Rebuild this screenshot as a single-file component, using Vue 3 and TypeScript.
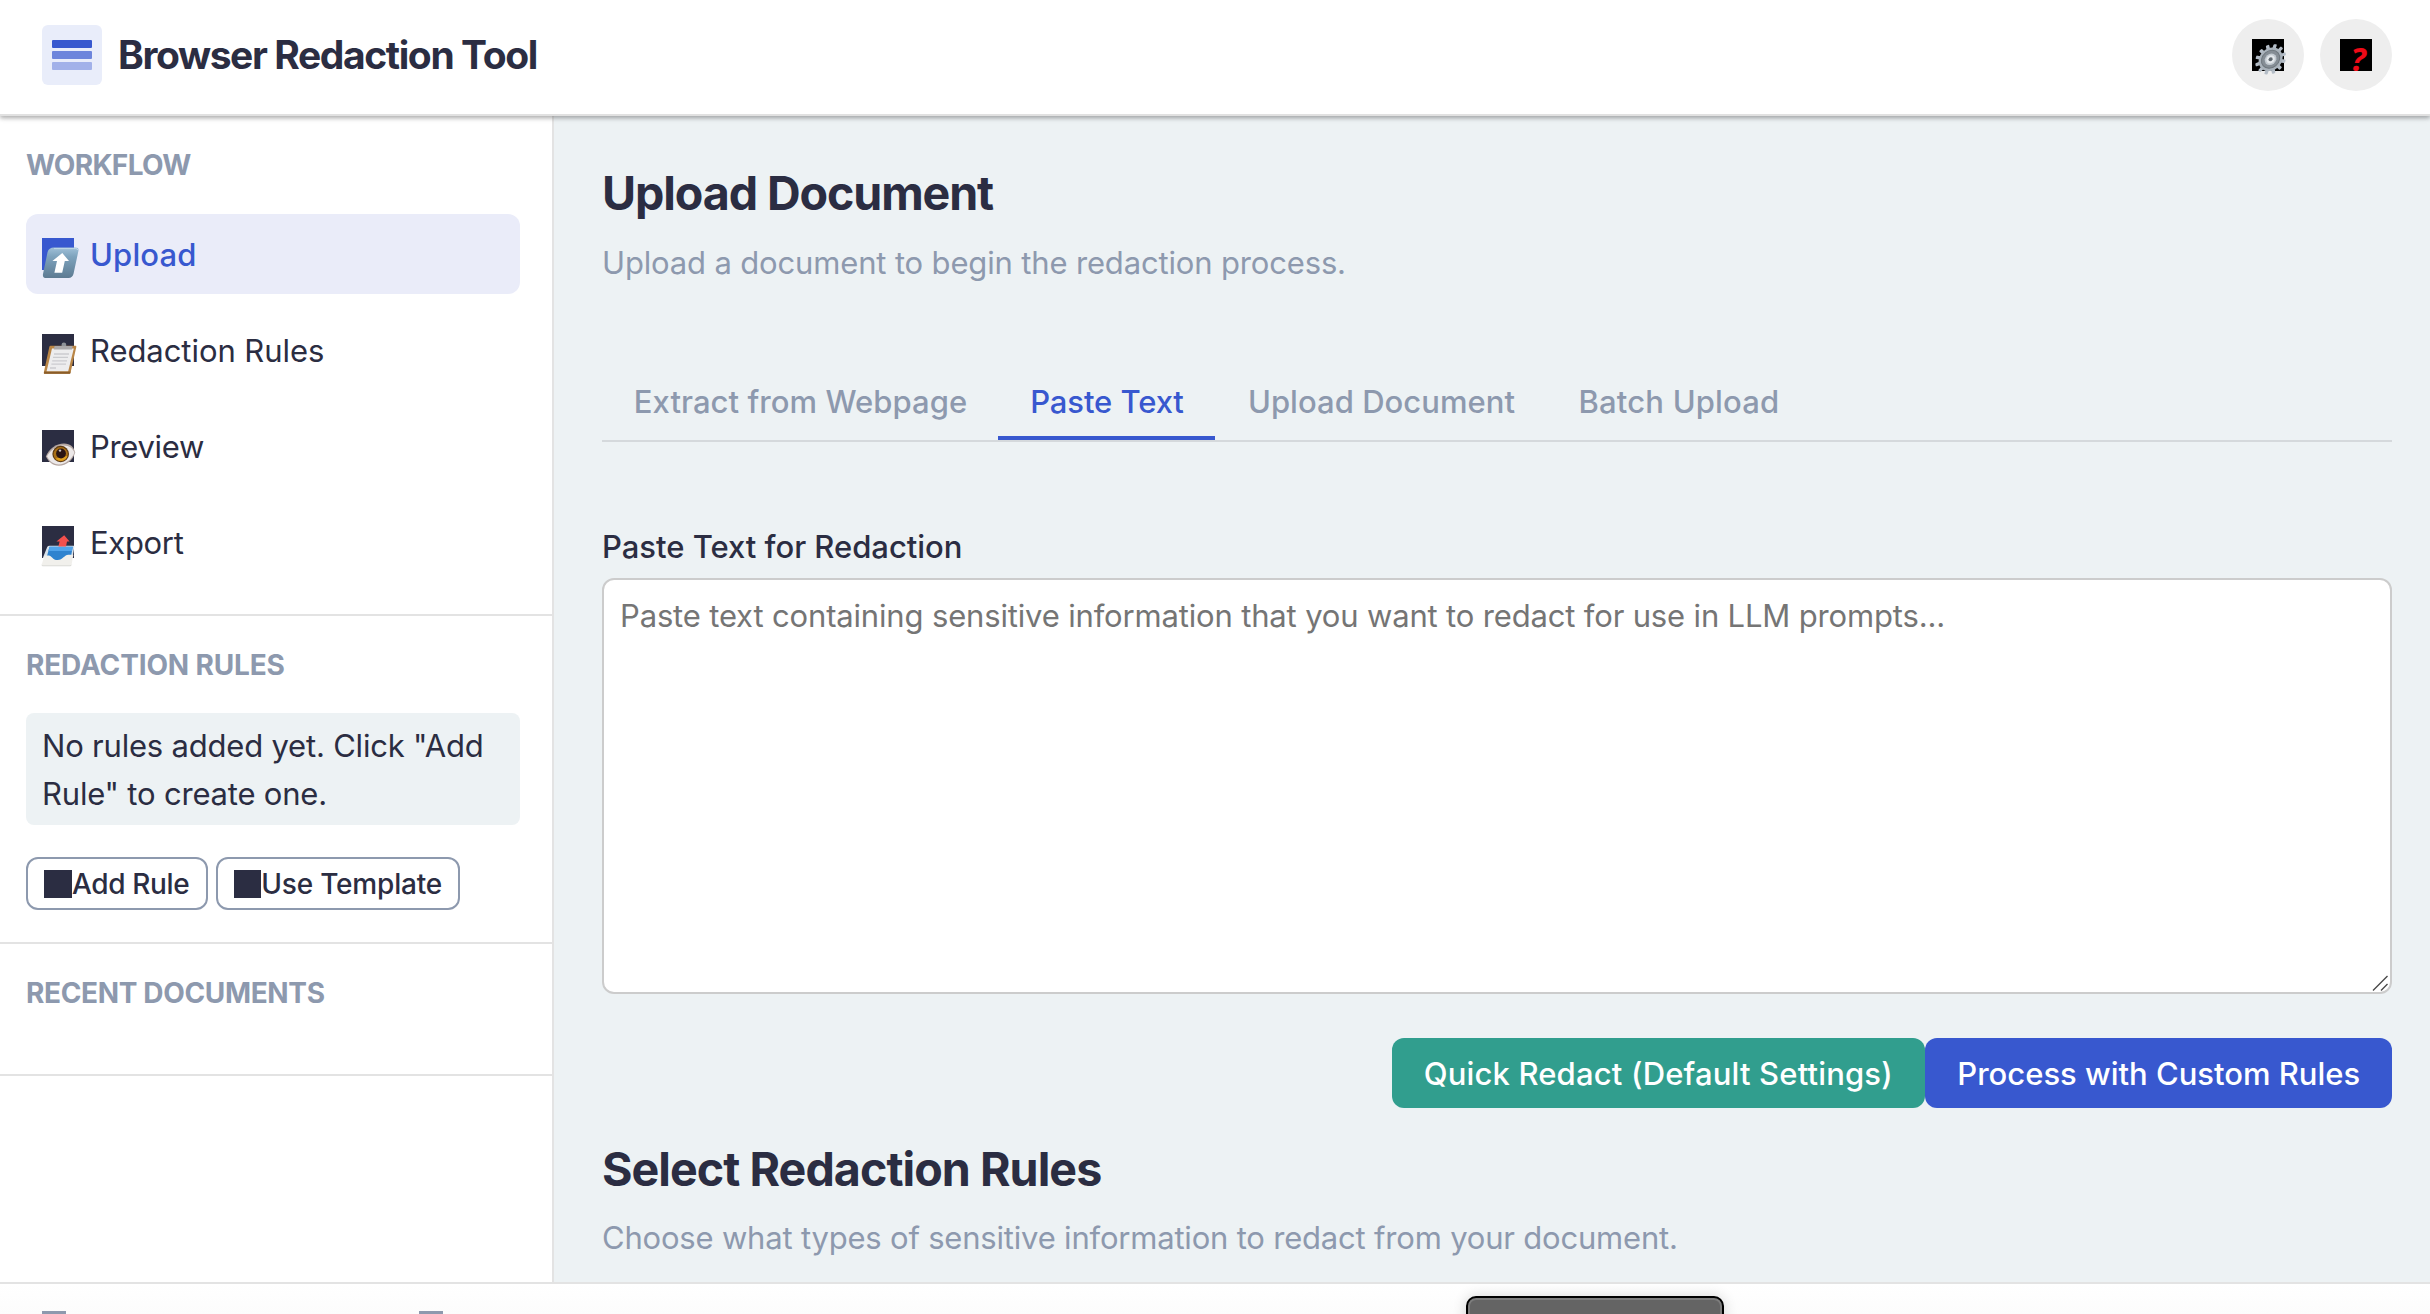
<script setup lang="ts">
import { ref } from 'vue'

type StepId = 'upload' | 'rules' | 'preview' | 'export'

interface Step {
  id: StepId
  label: string
}

const steps: Step[] = [
  { id: 'upload', label: 'Upload' },
  { id: 'rules', label: 'Redaction Rules' },
  { id: 'preview', label: 'Preview' },
  { id: 'export', label: 'Export' },
]

const tabs = [
  { id: 'extract', label: 'Extract from Webpage' },
  { id: 'paste', label: 'Paste Text' },
  { id: 'document', label: 'Upload Document' },
  { id: 'batch', label: 'Batch Upload' },
]

const activeStep = ref<StepId>('upload')
const activeTab = ref('paste')
const pastedText = ref('')
const gearTeeth = Array.from({ length: 12 }, (_, i) => i * 30)
</script>

<template>
  <div class="app">
    <header class="header">
      <div class="brand">
        <div class="logo"><i></i><i></i><i></i></div>
        <h1 class="title">Browser Redaction Tool</h1>
      </div>
      <div class="actions">
        <button class="round" aria-label="Settings">
          <svg class="glyph" viewBox="0 0 32 32">
            <rect width="32" height="32" fill="#000" />
            <g transform="translate(18.6 20.3) skewX(-10)">
              <rect v-for="a in gearTeeth" :key="a" x="-1.7" y="-15.2" width="3.4" height="6" rx="1" fill="#b4bdc7" :transform="`rotate(${a + 8})`" />
              <circle r="11.8" fill="#a9b2bb" />
              <circle r="9" fill="#858d95" stroke="#6f777e" stroke-width="1" />
              <circle r="5.8" fill="#c3cad1" />
              <circle r="4.1" fill="#e4e8ec" />
              <circle r="2" fill="#5f676e" />
            </g>
          </svg>
        </button>
        <button class="round" aria-label="Help">
          <svg class="glyph" viewBox="0 0 32 32">
            <rect width="32" height="32" fill="#000" />
            <text class="help-mark" x="10.5" y="32.3">?</text>
          </svg>
        </button>
      </div>
    </header>

    <div class="body">
      <aside class="sidebar">
        <section class="section">
          <h2 class="heading workflow">WORKFLOW</h2>
          <nav class="steps">
            <a
              v-for="step in steps"
              :key="step.id"
              class="step"
              :class="[step.id, { active: step.id === activeStep }]"
              @click="activeStep = step.id"
            >
              <svg class="glyph" viewBox="0 0 32 32">
                <rect width="32" height="32" fill="currentColor" />
                <template v-if="step.id === 'upload'">
                  <defs>
                    <linearGradient id="key" x1="0" y1="0" x2="0" y2="1">
                      <stop offset="0" stop-color="#9fc0d8" />
                      <stop offset="0.3" stop-color="#7ea3bd" />
                      <stop offset="1" stop-color="#5d7b92" />
                    </linearGradient>
                  </defs>
                  <path d="M12 9.5H33.5Q37.2 9.5 36.4 13L31.6 35.6Q30.6 40 26.5 40H4.6Q0.2 40 1 36L5.6 14Q6.8 9.5 12 9.5Z" fill="url(#key)" />
                  <path d="M12 10.6H33.5Q35.6 10.6 35.8 12" fill="none" stroke="#c5dbe9" stroke-width="0.9" />
                  <path d="M20.3 15L27 23H22.8L20.2 34.7H12.4L15 23H10.4Z" fill="#fff" />
                </template>
                <template v-else-if="step.id === 'rules'">
                  <path d="M8.6 11.8H33.4Q34.6 11.8 34.3 13L28.6 38.4Q28.3 39.7 27 39.7H2.6Q1.5 39.7 1.8 38.5L7.3 13Q7.6 11.8 8.6 11.8Z" fill="#b98545" />
                  <path d="M2.2 37.4H28.6L28.2 39.7H2Z" fill="#8a5c28" />
                  <path d="M10 14.4H31.8L26.2 37.2H4.6Z" fill="#ededee" />
                  <path d="M12 20H27M11 23.4H26M10.2 26.8H25M9.4 30.2H24M8 34H14" stroke="#cbcccf" stroke-width="1.3" />
                  <path d="M12.6 12H30.6L30 15.4H11.8Z" fill="#aaa8aa" />
                  <path d="M19.6 12V10.4A2.3 2 0 0 1 24.2 10.4V12Z" fill="#8e9298" />
                </template>
                <template v-else-if="step.id === 'preview'">
                  <path d="M3.8 26.5C7 19 14 13.6 22 13.6C28.5 13.6 32 17.5 33.2 22.6C31 30 24.5 35.8 16.8 35.8C10.5 35.8 6.4 31.5 3.8 26.5Z" fill="#b5a7a2" />
                  <path d="M5 26.2C8.4 20 14.5 15.4 21.6 15.4C27.4 15.4 31 18.4 32.4 22.8C29.6 29.6 23.4 34.4 16.8 34.4C11.2 34.4 7.4 31 5 26.2Z" fill="#ece8e8" />
                  <circle cx="18.7" cy="24" r="8.3" fill="#5c3a12" />
                  <circle cx="18.7" cy="24.2" r="7.1" fill="#a96f16" />
                  <path d="M13.6 28.6A7 7 0 0 0 25.4 26Z" fill="#dfa01e" />
                  <circle cx="19" cy="23.5" r="4.9" fill="#2a1512" />
                  <circle cx="18" cy="20.6" r="1.2" fill="#fff" opacity="0.75" />
                </template>
                <template v-else>
                  <path d="M7.5 19.8H31.6Q32.6 19.8 32.3 21L30.6 31L0.8 32L5.2 21Q5.8 19.8 7.5 19.8Z" fill="#d8e2ea" />
                  <path d="M7.6 20.8H30.8L28.2 35H3.6Z" fill="#2f83cf" />
                  <path d="M7.6 20.8H30.8L30 25H6.2Z" fill="#51a3ea" />
                  <path d="M22.2 9.2L27.6 15.6H25L24 20.6H16.4L17.6 15.6H14.4Z" fill="#f4504d" />
                  <path d="M2.4 29.4H6.8C9.6 29.4 10.6 34 15.6 34C21 34 22.4 28.8 26.4 28.8H31.4L29.6 38.4Q29.2 39.8 28 39.8H0.8Q-0.6 39.8 -0.2 38.4Z" fill="#f1f0ec" />
                  <path d="M-0.2 38.8Q0 39.8 0.8 39.8H28Q29.2 39.8 29.5 38.8" fill="none" stroke="#cfcfca" stroke-width="0.7" />
                </template>
              </svg>
              <span>{{ step.label }}</span>
            </a>
          </nav>
        </section>

        <section class="section">
          <h2 class="heading rules-heading">REDACTION RULES</h2>
          <p class="empty">No rules added yet. Click "Add Rule" to create one.</p>
          <div class="rule-actions">
            <button class="outline add"><i></i><span>Add Rule</span></button>
            <button class="outline template"><i></i><span>Use Template</span></button>
          </div>
        </section>

        <section class="section">
          <h2 class="heading recent">RECENT DOCUMENTS</h2>
        </section>
      </aside>

      <main class="main">
        <h2 class="page-title">Upload Document</h2>
        <p class="lead">Upload a document to begin the redaction process.</p>

        <div class="tabs">
          <button
            v-for="tab in tabs"
            :key="tab.id"
            class="tab"
            :class="[tab.id, { active: tab.id === activeTab }]"
            @click="activeTab = tab.id"
          >
            {{ tab.label }}
          </button>
        </div>

        <label class="label" for="paste">Paste Text for Redaction</label>
        <div class="field">
          <textarea
            id="paste"
            v-model="pastedText"
            placeholder="Paste text containing sensitive information that you want to redact for use in LLM prompts..."
          ></textarea>
          <svg class="grip" viewBox="0 0 16 16">
            <path d="M1 15.5L15.5 1M9 15.5L15.5 9" fill="none" stroke="#4a4a4a" stroke-width="1.4" />
          </svg>
        </div>

        <div class="submit">
          <button class="solid quick">Quick Redact (Default Settings)</button>
          <button class="solid process">Process with Custom Rules</button>
        </div>

        <h2 class="page-title select">Select Redaction Rules</h2>
        <p class="lead choose">Choose what types of sensitive information to redact from your document.</p>
      </main>
    </div>

    <footer class="footer">
      <i></i><i></i>
      <div class="tooltip"></div>
    </footer>
  </div>
</template>

<style>
body {
  overflow: hidden;
}
</style>

<style scoped>
* {
  box-sizing: border-box;
  margin: 0;
}

.app {
  display: flex;
  flex-direction: column;
  height: 1314px;
  overflow: hidden;
  background: #fff;
  color: #2b2d42;
  font: 400 31px/48px Inter, "Liberation Sans", sans-serif;
}

button {
  border: 0;
  padding: 0;
  background: none;
  color: inherit;
  font-family: inherit;
  white-space: nowrap;
}

.header {
  position: relative;
  z-index: 1;
  flex: none;
  display: flex;
  align-items: center;
  justify-content: space-between;
  height: 116px;
  padding: 0 38px 4px 42px;
  border-bottom: 2px solid #e1e1e1;
  background: #fff;
  box-shadow: 0 2px 6px rgba(0, 0, 0, 0.12), 0 2px 4px rgba(0, 0, 0, 0.24);
}

.brand {
  display: flex;
  align-items: center;
  gap: 16px;
}

.logo {
  display: flex;
  flex-direction: column;
  justify-content: center;
  gap: 3.5px;
  width: 60px;
  height: 60px;
  padding: 0 10px;
  border-radius: 6px;
  background: #e9edfa;
}

.logo i {
  height: 7.7px;
  border-radius: 1px;
  background: #3858cf;
}

.logo i:nth-child(2) {
  opacity: 0.7;
}

.logo i:nth-child(3) {
  opacity: 0.4;
}

.title {
  font-size: 39px;
  font-weight: 650;
  letter-spacing: -1.4px;
}

.actions {
  display: flex;
  gap: 16px;
}

.round {
  display: flex;
  align-items: center;
  justify-content: center;
  width: 72px;
  height: 72px;
  border-radius: 50%;
  background: #eee;
}

.glyph {
  flex: none;
  width: 32px;
  height: 32px;
  overflow: visible;
}

.help-mark {
  fill: #ee0a17;
  font: italic 700 33px "Noto Sans", sans-serif;
}

.body {
  flex: none;
  display: flex;
  height: 1166px;
}

.sidebar {
  flex: none;
  width: 554px;
  border-right: 2px solid #e3e3e3;
}

.section {
  padding: 32px 32px 32px 26px;
  border-bottom: 2px solid #e3e3e3;
}

.heading {
  margin-bottom: 32px;
  color: #8d99ae;
  font-size: 28px;
  font-weight: 650;
  line-height: 34px;
}

.workflow {
  letter-spacing: -0.65px;
}

.rules-heading {
  margin-bottom: 31px;
  letter-spacing: -0.15px;
}

.recent {
  letter-spacing: -0.35px;
}

.steps {
  display: flex;
  flex-direction: column;
  gap: 16px;
}

.step {
  display: flex;
  align-items: center;
  gap: 16px;
  height: 80px;
  padding: 0 16px;
  border-radius: 12px;
  letter-spacing: -0.06px;
}

.step span {
  padding-top: 2px;
}

.step.preview,
.step.export {
  letter-spacing: -0.33px;
}

.step.active {
  background: #eaecf9;
  color: #3858cf;
  font-weight: 500;
  letter-spacing: 0.15px;
}

.empty {
  padding: 9px 16px 7px;
  border-radius: 8px;
  background: #edf2f4;
  letter-spacing: -0.2px;
}

.rule-actions {
  display: flex;
  gap: 8px;
  margin-top: 32px;
}

.outline {
  display: flex;
  align-items: center;
  height: 53px;
  padding: 0 16px;
  border: 2px solid #8d99ae;
  border-radius: 12px;
  background: #fff;
  font-size: 28px;
  font-weight: 500;
}

.outline i {
  width: 28px;
  height: 28px;
  background: #2b2d42;
}

.add {
  width: 182px;
  letter-spacing: -0.35px;
}

.template {
  width: 244px;
  letter-spacing: -0.2px;
}

.main {
  flex: 1;
  padding: 48px 38px 0 48px;
  overflow: hidden;
  background: #edf2f4;
}

.page-title {
  font-size: 46.6px;
  font-weight: 650;
  line-height: 58px;
  letter-spacing: -1.1px;
}

.select {
  margin-top: 32px;
  letter-spacing: -0.95px;
}

.lead {
  margin-top: 17px;
  color: #8d99ae;
  letter-spacing: -0.155px;
}

.choose {
  margin-top: 16px;
  letter-spacing: -0.198px;
}

.tabs {
  display: flex;
  margin-top: 91px;
  border-bottom: 2px solid #d5d9dc;
}

.tab {
  height: 62px;
  padding: 0 0 10px 1px;
  border-bottom: 4px solid transparent;
  color: #8d99ae;
  font-size: 31px;
  font-weight: 500;
  line-height: 48px;
}

.extract {
  width: 396px;
  letter-spacing: 0.06px;
}

.paste {
  width: 217px;
  letter-spacing: -0.08px;
}

.document {
  width: 332px;
  letter-spacing: 0.04px;
}

.batch {
  width: 263px;
  letter-spacing: 0.18px;
}

.tab.active {
  border-bottom-color: #3858cf;
  color: #3858cf;
}

.label {
  display: block;
  margin: 81px 0 7px;
  font-weight: 500;
  letter-spacing: -0.02px;
}

.field {
  position: relative;
  height: 416px;
}

textarea {
  display: block;
  width: 100%;
  height: 100%;
  padding: 12px 16px;
  border: 2px solid #ccc;
  border-radius: 12px;
  outline: 0;
  resize: none;
  background: #fff;
  color: inherit;
  font: inherit;
  letter-spacing: -0.162px;
}

textarea::placeholder {
  color: #757575;
}

.grip {
  position: absolute;
  right: 4px;
  bottom: 3px;
  width: 16px;
  height: 16px;
}

.submit {
  display: flex;
  justify-content: flex-end;
  margin-top: 44px;
}

.solid {
  height: 70px;
  padding-top: 1px;
  border-radius: 12px;
  color: #fff;
  font-size: 31px;
  font-weight: 500;
}

.quick {
  width: 532.5px;
  background: #319e8e;
  letter-spacing: 0.16px;
}

.process {
  width: 467.5px;
  padding-left: 1px;
  background: #3858cf;
  letter-spacing: -0.01px;
}

.footer {
  position: relative;
  flex: none;
  display: flex;
  gap: 353px;
  height: 32px;
  padding: 27px 42px 0;
  border-top: 2px solid #e3e3e3;
  background: linear-gradient(#fff, #fcfcfc);
}

.footer > i {
  width: 24px;
  height: 24px;
  background: #8d99ae;
}

.tooltip {
  position: absolute;
  top: 12px;
  left: 1466px;
  width: 258px;
  height: 56px;
  border: 2px solid #000;
  border-radius: 10px;
  background: #646464;
  box-shadow: inset 0 0 0 2px #7d7d7d, 0 0 14px rgba(0, 0, 0, 0.16);
}
</style>
